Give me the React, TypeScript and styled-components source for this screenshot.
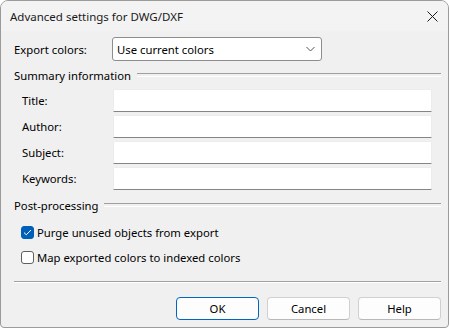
import { Fragment } from "react";
import styled, { createGlobalStyle } from "styled-components";

const Global = createGlobalStyle`
  html, body {
    margin: 0;
    padding: 0;
    background: #ffffff;
  }
  * {
    box-sizing: border-box;
  }
`;

const Window = styled.div`
  width: 449px;
  height: 328px;
  display: flex;
  flex-direction: column;
  border: 1px solid #9b9b9b;
  border-radius: 8px 8px 4px 4px;
  background: #f0f0f0;
  overflow: hidden;
  font-family: "Segoe UI", "Noto Sans", sans-serif;
  font-size: 11.3px;
  color: #000;
`;

const TitleBar = styled.div`
  height: 30px;
  flex: none;
  display: flex;
  align-items: center;
  justify-content: space-between;
  padding: 0 10px 0 9px;
  background: #f3f3f3;
`;

const TitleText = styled.span`
  font-size: 11.5px;
  color: #1a1a1a;
`;

const CloseBtn = styled.div`
  width: 12px;
  height: 12px;
  display: flex;
  align-items: center;
  justify-content: center;
`;

const Body = styled.div`
  flex: 1;
  display: flex;
  flex-direction: column;
  padding: 6px 7px 0 13px;
`;

const ExportRow = styled.div`
  display: grid;
  grid-template-columns: 98px 210px;
  align-items: center;
  height: 24px;
`;

const Select = styled.div`
  height: 24px;
  display: flex;
  align-items: center;
  justify-content: space-between;
  padding: 0 6px 0 4px;
  background: #ffffff;
  border: 1px solid #8d8d8d;
  border-radius: 3px;
`;

const GroupHeader = styled.div<{ $top: number }>`
  display: flex;
  align-items: center;
  gap: 6px;
  margin-top: ${(p) => p.$top}px;
  height: 16px;

  &::after {
    content: "";
    flex: 1;
    height: 2px;
    border-top: 1px solid #a0a0a0;
    border-bottom: 1px solid #ffffff;
  }
`;

const Fields = styled.div`
  display: grid;
  grid-template-columns: 91px 319px;
  row-gap: 3px;
  margin-top: 6px;
  padding-left: 8px;
`;

const FieldLabel = styled.div`
  display: flex;
  align-items: center;
  height: 23px;
`;

const TextInput = styled.div`
  height: 23px;
  background: #ffffff;
  border: 1px solid #ececec;
  border-bottom: 1px solid #858585;
  border-radius: 2px 2px 0 0;
`;

const Checks = styled.div`
  display: flex;
  flex-direction: column;
  gap: 6px;
  margin-top: 10px;
  padding-left: 7px;
`;

const CheckRow = styled.label`
  display: flex;
  align-items: center;
  gap: 3px;
  height: 19px;
`;

const Box = styled.span<{ $on?: boolean }>`
  width: 13px;
  height: 13px;
  border-radius: 3px;
  display: flex;
  align-items: center;
  justify-content: center;
  background: ${(p) => (p.$on ? "#005fb8" : "#ffffff")};
  border: 1px solid ${(p) => (p.$on ? "#005fb8" : "#5f5f5f")};
`;

const Separator = styled.div`
  margin-top: 14px;
  height: 2px;
  border-top: 1px solid #a0a0a0;
  border-bottom: 1px solid #ffffff;
`;

const Buttons = styled.div`
  display: flex;
  justify-content: flex-end;
  gap: 8px;
  margin-top: 14px;
`;

const Button = styled.div<{ $primary?: boolean }>`
  width: 83px;
  height: 23px;
  display: flex;
  align-items: center;
  justify-content: center;
  background: #fdfdfd;
  border: 1px solid ${(p) => (p.$primary ? "#0067c0" : "#d0d0d0")};
  border-bottom-color: ${(p) => (p.$primary ? "#0067c0" : "#b8b8b8")};
  border-radius: 4px;
`;

const fields = ["Title:", "Author:", "Subject:", "Keywords:"];

export default function App() {
  return (
    <>
      <Global />
      <Window>
        <TitleBar>
          <TitleText>Advanced settings for DWG/DXF</TitleText>
          <CloseBtn>
            <svg width="11" height="11" viewBox="0 0 11 11">
              <path d="M0.5 0.5L10.5 10.5M10.5 0.5L0.5 10.5" stroke="#1a1a1a" strokeWidth="1" />
            </svg>
          </CloseBtn>
        </TitleBar>
        <Body>
          <ExportRow>
            <span>Export colors:</span>
            <Select>
              <span>Use current colors</span>
              <svg width="9" height="6" viewBox="0 0 9 6">
                <path d="M0.5 1L4.5 5L8.5 1" fill="none" stroke="#555" strokeWidth="1" />
              </svg>
            </Select>
          </ExportRow>

          <GroupHeader $top={6}>Summary information</GroupHeader>
          <Fields>
            {fields.map((f) => (
              <Fragment key={f}>
                <FieldLabel>{f}</FieldLabel>
                <TextInput />
              </Fragment>
            ))}
          </Fields>

          <GroupHeader $top={7}>Post-processing</GroupHeader>
          <Checks>
            <CheckRow>
              <Box $on>
                <svg width="9" height="7" viewBox="0 0 9 7">
                  <path d="M1 3.6L3.3 5.8L8 1" fill="none" stroke="#fff" strokeWidth="1" />
                </svg>
              </Box>
              Purge unused objects from export
            </CheckRow>
            <CheckRow>
              <Box />
              Map exported colors to indexed colors
            </CheckRow>
          </Checks>

          <Separator />
          <Buttons>
            <Button $primary>OK</Button>
            <Button>Cancel</Button>
            <Button>Help</Button>
          </Buttons>
        </Body>
      </Window>
    </>
  );
}
